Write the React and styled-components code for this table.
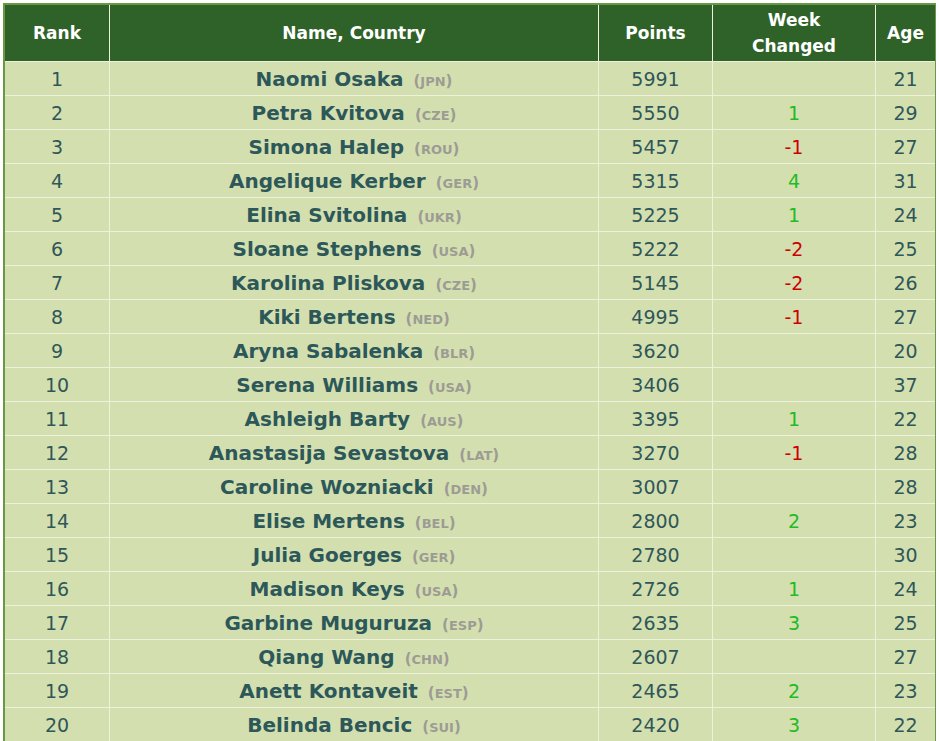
import React from 'react'
import styled, { createGlobalStyle } from 'styled-components';

const players = [
    { rank: 1, name: 'Naomi Osaka', country: 'jpn', points: 5991, change: null, age: 21 },
    { rank: 2, name: 'Petra Kvitova', country: 'cze', points: 5550, change: 1, age: 29 },
    { rank: 3, name: 'Simona Halep', country: 'rou', points: 5457, change: -1, age: 27 },
    { rank: 4, name: 'Angelique Kerber', country: 'ger', points: 5315, change: 4, age: 31 },
    { rank: 5, name: 'Elina Svitolina', country: 'ukr', points: 5225, change: 1, age: 24 },
    { rank: 6, name: 'Sloane Stephens', country: 'usa', points: 5222, change: -2, age: 25 },
    { rank: 7, name: 'Karolina Pliskova', country: 'cze', points: 5145, change: -2, age: 26 },
    { rank: 8, name: 'Kiki Bertens', country: 'ned', points: 4995, change: -1, age: 27 },
    { rank: 9, name: 'Aryna Sabalenka', country: 'blr', points: 3620, change: null, age: 20 },
    { rank: 10, name: 'Serena Williams', country: 'usa', points: 3406, change: null, age: 37 },
    { rank: 11, name: 'Ashleigh Barty', country: 'aus', points: 3395, change: 1, age: 22 },
    { rank: 12, name: 'Anastasija Sevastova', country: 'lat', points: 3270, change: -1, age: 28 },
    { rank: 13, name: 'Caroline Wozniacki', country: 'den', points: 3007, change: null, age: 28 },
    { rank: 14, name: 'Elise Mertens', country: 'bel', points: 2800, change: 2, age: 23 },
    { rank: 15, name: 'Julia Goerges', country: 'ger', points: 2780, change: null, age: 30 },
    { rank: 16, name: 'Madison Keys', country: 'usa', points: 2726, change: 1, age: 24 },
    { rank: 17, name: 'Garbine Muguruza', country: 'esp', points: 2635, change: 3, age: 25 },
    { rank: 18, name: 'Qiang Wang', country: 'chn', points: 2607, change: null, age: 27 },
    { rank: 19, name: 'Anett Kontaveit', country: 'est', points: 2465, change: 2, age: 23 },
    { rank: 20, name: 'Belinda Bencic', country: 'sui', points: 2420, change: 3, age: 22 },
];

const GlobalStyle = createGlobalStyle`
    * { box-sizing: border-box; }
    body {
        margin: 3px;
        background: #ffffff;
        font-family: "DejaVu Sans", Verdana, sans-serif;
    }
`;

const Table = styled.table`
    width: 934px;
    table-layout: fixed;
    border-collapse: separate;
    border-spacing: 0;
    border: 2px solid #6a9945;
    background-color: #d4dfb0;
`;

const HeadCell = styled.th`
    width: ${({ w }) => w}px;
    height: 57px;
    padding: 0;
    background-color: #2f6228;
    color: #ffffff;
    font-size: 17px;
    font-weight: 700;
    line-height: 26px;
    text-align: center;
    border-right: ${({ last }) => last ? 'none' : '1px solid #eef2dc'};
    border-bottom: 1px solid #eef2dc;
`;

const Cell = styled.td`
    height: 34px;
    padding: 0;
    color: #2f5758;
    font-size: 19px;
    text-align: center;
    white-space: nowrap;
    border-right: ${({ last }) => last ? 'none' : '1px solid #eef2dc'};
    border-bottom: 1px solid #eef2dc;
`;

const Name = styled.span`
    font-size: 20px;
    font-weight: 700;
    color: #2d5859;
`;

const Country = styled.span`
    margin-left: 10px;
    font-size: 15px;
    font-weight: 700;
    color: #9c9c94;
`;

const Code = styled.span`
    font-size: 13px;
    text-transform: uppercase;
`;

const Change = styled.span`
    color: ${({ up }) => up ? '#22bb22' : '#cc0000'};
`;

const columns = [
    { label: 'Rank', w: 105 },
    { label: 'Name, Country', w: 489 },
    { label: 'Points', w: 114 },
    { label: <>Week<br />Changed</>, w: 163 },
    { label: 'Age', w: 59 },
];

const App = () => {
    return (
        <>
            <GlobalStyle />
            <Table>
                <thead>
                    <tr>
                        {columns.map((c, i) => (
                            <HeadCell key={i} w={c.w} last={i === columns.length - 1}>{c.label}</HeadCell>
                        ))}
                    </tr>
                </thead>
                <tbody>
                    {players.map(p => (
                        <tr key={p.rank}>
                            <Cell>{p.rank}</Cell>
                            <Cell>
                                <Name>{p.name}</Name>
                                <Country>(<Code>{p.country}</Code>)</Country>
                            </Cell>
                            <Cell>{p.points}</Cell>
                            <Cell>
                                {p.change !== null && <Change up={p.change > 0}>{p.change}</Change>}
                            </Cell>
                            <Cell last>{p.age}</Cell>
                        </tr>
                    ))}
                </tbody>
            </Table>
        </>
    )
}

export default App;
